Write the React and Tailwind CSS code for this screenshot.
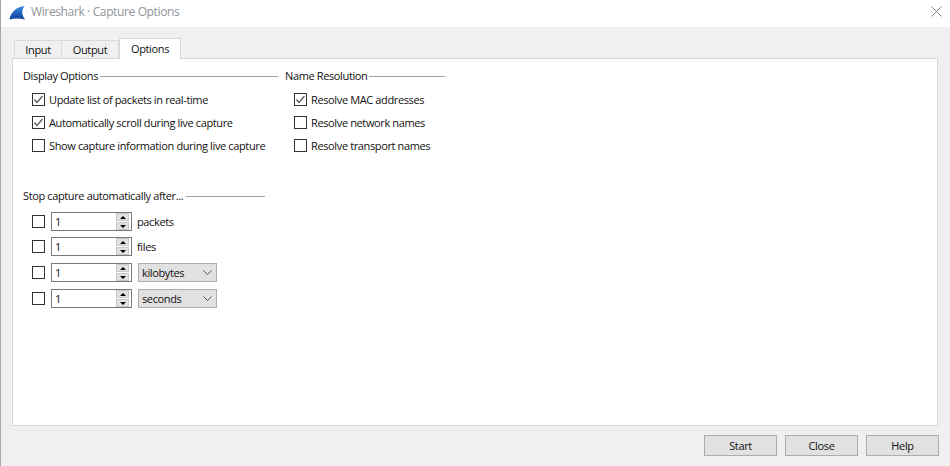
const FONT = "font-['Open_Sans','Noto_Sans',sans-serif] tracking-[-0.37px]";

function Check({ checked, label }) {
  return (
    <div className="flex items-center h-[13px] gap-[4px]">
      <div className="w-[13px] h-[13px] bg-white border border-[#333] flex items-center justify-center shrink-0">
        {checked && (
          <svg width="11" height="11" viewBox="0 0 11 11">
            <path d="M1.5 5.5 L4 8.5 L9.5 2" fill="none" stroke="#555" strokeWidth="1.2" />
          </svg>
        )}
      </div>
      {label && <span className="text-[11px] leading-[13px] whitespace-nowrap">{label}</span>}
    </div>
  );
}

function GroupTitle({ title, lineClass }) {
  return (
    <div className="flex items-center h-[14px]">
      <span className="text-[11px] leading-[14px] whitespace-nowrap">{title}</span>
      <div className={`h-px bg-[#a0a0a0] shrink-0 ${lineClass}`} />
    </div>
  );
}

function Spin() {
  return (
    <div className="w-[81px] h-full bg-white border border-[#7a7a7a] flex items-center justify-between pl-[3px] pr-[2px] shrink-0">
      <span className="text-[11px] leading-none">1</span>
      <div className="w-[13px] flex flex-col gap-px">
        <div className="h-[8px] bg-[#e1e1e1] border border-[#c8c8c8] flex items-center justify-center">
          <div className="w-0 h-0 border-x-[3px] border-x-transparent border-b-[3px] border-b-black" />
        </div>
        <div className="h-[8px] bg-[#e1e1e1] border border-[#c8c8c8] flex items-center justify-center">
          <div className="w-0 h-0 border-x-[3px] border-x-transparent border-t-[3px] border-t-black" />
        </div>
      </div>
    </div>
  );
}

function Combo({ value }) {
  return (
    <div className="w-[79px] h-full bg-[#e1e1e1] border border-[#adadad] flex items-center justify-between pl-[3px] pr-[4px]">
      <span className="text-[11px] leading-none">{value}</span>
      <svg width="9" height="6" viewBox="0 0 9 6">
        <path d="M0.5 0.5 L4.5 4.5 L8.5 0.5" fill="none" stroke="#555" strokeWidth="1" />
      </svg>
    </div>
  );
}

function StopRow({ unit, combo, className = '' }) {
  return (
    <div className={`flex items-center gap-[6px] h-[19px] ${className}`}>
      <Check />
      <Spin />
      {combo ? <Combo value={unit} /> : <span className="text-[11px] leading-none -ml-px">{unit}</span>}
    </div>
  );
}

function Button({ label }) {
  return (
    <div className="w-[73px] h-[21px] bg-[#e1e1e1] border border-[#adadad] flex items-center justify-center text-[11px] leading-none">
      {label}
    </div>
  );
}

export default function App() {
  return (
    <div className={`${FONT} w-[950px] h-[466px] bg-[#f0f0f0] text-[#111] flex flex-col border-l border-[#a8a8a8] overflow-hidden`}>
      {/* title bar */}
      <div className="h-[27px] bg-white flex items-center justify-between pl-[8px] pr-[8px] shrink-0">
        <div className="flex items-center gap-[5px] pb-[3px]">
          <svg width="17" height="17" viewBox="0 0 17 17">
            <defs>
              <linearGradient id="fin" x1="0" y1="0" x2="0" y2="1">
                <stop offset="0" stopColor="#3f8fe0" />
                <stop offset="1" stopColor="#0b3f9e" />
              </linearGradient>
            </defs>
            <path d="M0.5 15.5 C1.5 9 7 2.5 15.5 2 C12.5 6 12.5 11 16 15.5 C11 14 5 14 0.5 15.5 Z" fill="url(#fin)" />
          </svg>
          <span className="text-[12px] leading-none text-[#8f949a]">Wireshark · Capture Options</span>
        </div>
        <svg width="11" height="11" viewBox="0 0 11 11" className="mb-[5px]">
          <path d="M0.5 0.5 L10.5 10.5 M10.5 0.5 L0.5 10.5" stroke="#888" strokeWidth="1" />
        </svg>
      </div>

      {/* tabs */}
      <div className="flex items-end pl-[13px] h-[31px] shrink-0 relative z-10">
        <div className="w-[48px] h-[18px] bg-[#f0f0f0] border border-b-0 border-[#d9d9d9] flex items-center justify-center text-[11px] leading-none">Input</div>
        <div className="w-[57px] h-[18px] bg-[#f0f0f0] border border-l-0 border-b-0 border-[#d9d9d9] flex items-center justify-center text-[11px] leading-none">Output</div>
        <div className="w-[62px] h-[21px] -mb-px pb-px bg-white border border-b-0 border-[#d9d9d9] flex items-center justify-center text-[11px] leading-none">Options</div>
      </div>

      {/* pane */}
      <div className="ml-[11px] w-[926px] h-[368px] bg-white border border-[#d9d9d9] pl-[10px] pt-[10px] shrink-0">
        <div className="flex">
          <div className="w-[262px]">
            <GroupTitle title="Display Options" lineClass="ml-[2px] w-[178px]" />
            <div className="mt-[10px] ml-[9px] flex flex-col gap-[10px]">
              <Check checked label="Update list of packets in real-time" />
              <Check checked label="Automatically scroll during live capture" />
              <Check label="Show capture information during live capture" />
            </div>
          </div>
          <div>
            <GroupTitle title="Name Resolution" lineClass="ml-[2px] w-[76px]" />
            <div className="mt-[10px] ml-[9px] flex flex-col gap-[10px]">
              <Check checked label="Resolve MAC addresses" />
              <Check label="Resolve network names" />
              <Check label="Resolve transport names" />
            </div>
          </div>
        </div>

        <div className="mt-[37px]">
          <GroupTitle title="Stop capture automatically after..." lineClass="ml-[3px] w-[79px]" />
          <div className="mt-[9px] ml-[9px] flex flex-col gap-[7px]">
            <StopRow unit="packets" className="-mb-px" />
            <StopRow unit="files" />
            <StopRow unit="kilobytes" combo />
            <StopRow unit="seconds" combo />
          </div>
        </div>
      </div>

      {/* buttons */}
      <div className="flex justify-end gap-[8px] pr-[11px] mt-[9px]">
        <Button label="Start" />
        <Button label="Close" />
        <Button label="Help" />
      </div>
    </div>
  );
}
